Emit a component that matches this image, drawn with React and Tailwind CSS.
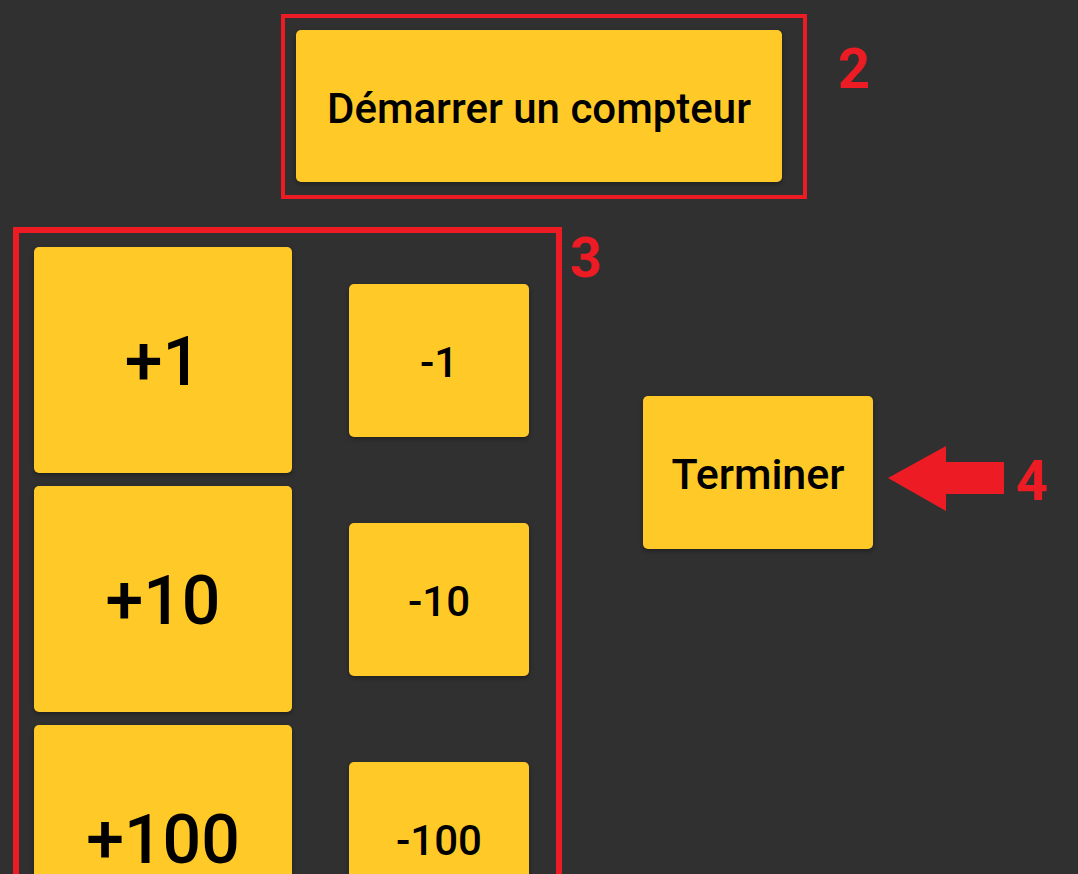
import React from "react";

function Btn({ className = "", children }) {
  return (
    <div
      className={
        "flex items-center justify-center rounded-[5px] bg-[#ffca28] text-black font-medium shadow-[0_2px_4px_rgba(0,0,0,0.35)] " +
        className
      }
    >
      <span className="translate-y-[2px]">{children}</span>
    </div>
  );
}

function Label({ className = "", children }) {
  return (
    <div className={"text-[56px] leading-none font-bold text-[#ed1c24] " + className}>
      {children}
    </div>
  );
}

export default function App() {
  const rows = [
    ["+1", "-1"],
    ["+10", "-10"],
    ["+100", "-100"],
  ];
  return (
    <div
      className="w-full h-[874px] overflow-hidden bg-[#303030]"
      style={{ fontFamily: "Roboto, 'Noto Sans', sans-serif" }}
    >
      {/* Row 1 */}
      <div className="flex items-start pt-[14px] pl-[281px]">
        <div className="border-4 border-[#ed1c24] pl-[11px] pr-[21px] pt-[12px] pb-[13px]">
          <Btn className="w-[486px] h-[152px] text-[42px]">Démarrer un compteur</Btn>
        </div>
        <Label className="ml-[31px] mt-[27px]">2</Label>
      </div>

      {/* Row 2 */}
      <div className="flex items-start mt-[28px] pl-[13px]">
        <div className="border-[6px] border-b-0 border-[#ed1c24] pl-[15px] pr-[27px] pt-[14px] pb-[20px] flex flex-col gap-[13px]">
          {rows.map(([a, b]) => (
            <div key={a} className="flex items-center gap-[57px]">
              <Btn className="w-[258px] h-[226px] text-[68px]">{a}</Btn>
              <Btn className="w-[180px] h-[153px] text-[42px]">{b}</Btn>
            </div>
          ))}
        </div>
        <Label className="ml-[8px] mt-[3px] w-[40px]">3</Label>
        <div className="flex items-start mt-[169px] ml-[33px]">
          <Btn className="w-[230px] h-[153px] text-[43px]">Terminer</Btn>
          <svg
            className="ml-[15px] mt-[50px]"
            width="116"
            height="65"
            viewBox="0 0 116 65"
          >
            <polygon
              points="0,32 58,0 58,16 116,16 116,48 58,48 58,65"
              fill="#ed1c24"
            />
          </svg>
          <Label className="ml-[12px] mt-[57px]">4</Label>
        </div>
      </div>
    </div>
  );
}
